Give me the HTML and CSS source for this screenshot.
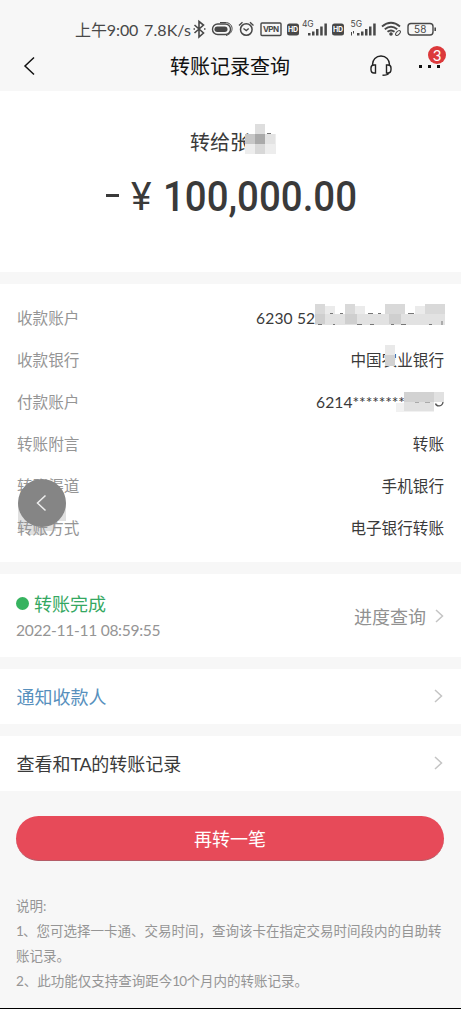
FILE: index.html
```html
<!DOCTYPE html>
<html lang="zh-CN">
<head>
<meta charset="utf-8">
<title>转账记录查询</title>
<link rel="stylesheet" href="styles.css">
</head>
<body>
<div class="screen">
  <header class="top">
    <div class="status">
      <span class="clock">上午9:00</span><span class="speed">7.8K/s</span>
      <svg class="status-icons" width="250" height="24" viewBox="190 17 250 24" fill="none" stroke="#484848" stroke-width="1.4">
        <path d="M194.500 25l9 8-4.500 4V21.500l4.500 3.500-9 8M193.500 29h1.500M204 29h1.500" stroke-width="1.600"/>
        <rect x="212.500" y="24" width="18" height="10.500" rx="5.200"/>
        <rect x="214.500" y="26.500" width="13" height="5.500" rx="2.700" fill="#484848" stroke="none"/>
        <path d="M220 22.500h5c9 0 9.500 11 1 13" stroke-width="1"/>
        <circle cx="246.300" cy="29.500" r="5.800" stroke-width="1.500"/>
        <path d="M239 25.500l3.500-3.200M253.500 25.500L250 22.300M243.500 28.500l2.800 2 2.400-2"/>
        <rect x="261" y="23" width="20" height="12.500" rx="1"/>
        <rect x="287" y="23.500" width="12" height="12" rx="2.500" fill="#484848" stroke="none"/>
        <rect x="332" y="23.500" width="12" height="12" rx="2.500" fill="#484848" stroke="none"/>
        <g fill="#484848" stroke="none">
          <path d="M308 33h2.500v2.500H308zM312 31.500h2.500v4H312zM316 29h2.500v6.500H316zM320.200 26.500h2.500v9h-2.500zM324.400 23.500h2.500v12h-2.500z"/>
          <path d="M351 32h1v3.500h-1zM353 31h1v2.500h-1zM357 33h2.500v2.500H357zM361 31.500h2.500v4H361zM365 29h2.500v6.500H365zM369 26.500h2.500v9H369zM373.200 23.500h2.500v12h-2.500z"/>
          <circle cx="391" cy="34" r="1.800"/>
        </g>
        <path d="M382 26.500q9-7.500 18 0M384.800 29.300q6.200-5 12.400 0M387.500 31.800q3.500-2.800 7 0" stroke-width="1.900"/>
        <ellipse cx="398" cy="33" rx="3" ry="1.600" transform="rotate(-45 398 33)" stroke-width="1"/>
        <rect x="408" y="23.500" width="25" height="11.500" rx="3"/>
        <path d="M435.200 27.500v3.500" stroke-width="1.600"/>
        <g fill="#484848" stroke="none" font-family="Inter, sans-serif">
          <text x="263" y="32.200" font-size="8" font-weight="700" textLength="16">VPN</text>
          <text x="302" y="27" font-size="8.500" textLength="11.500">4G</text>
          <text x="350.500" y="27" font-size="8.500" textLength="11.500">5G</text>
          <text x="414" y="32.800" font-size="10" textLength="12.500">58</text>
          <g fill="#fff" font-size="7" font-weight="700"><text x="288" y="32" textLength="10">HD</text><text x="333" y="32" textLength="10">HD</text></g>
        </g>
      </svg>
    </div>
    <div class="nav">
      <svg class="back" width="14" height="20" viewBox="0 0 14 20" fill="none" stroke="#111" stroke-width="1.5"><path d="M11 1.500L2 10l9 8.500"/></svg>
      <h1 class="title">转账记录查询</h1>
      <svg class="headset" width="24" height="24" viewBox="0 0 24 24" fill="none" stroke="#222" stroke-width="1.400"><path d="M3.500 12V10.500C3.500 5.700 7 2 12 2s8.500 3.700 8.500 8.500V12M6.500 11H5c-2 0-3 1.200-3 3v1.500c0 2 1 3.500 3 3.500h1.500zM17.500 11H19c2 0 3 1.200 3 3v1.500c0 2-1 3.500-3 3.500h-1.500zM20 19c-1 1.900-3 2.300-6.500 2.300"/></svg>
      <div class="more"><i></i><i></i><i></i><b class="badge">3</b></div>
    </div>
  </header>

  <section class="card amount-card">
    <div class="payee">转给张<svg class="mask" width="31" height="31" viewBox="0 0 31 31"><path fill="#ededed" d="M0 10h31v20H0z"/><path fill="#dedede" d="M10 0h10v10H10z"/><path fill="#c7c7c7" d="M0 10h10v10H0z"/><path fill="#aaa" d="M10 10h10v10H10z"/><path fill="#d8d8d8" d="M10 20h10v10H10z"/><path fill="#e3e3e3" d="M20 10h10v10H20z"/><path stroke="#777" d="M22 9.500h4"/></svg></div>
    <div class="amount"><span class="minus"></span><span class="yen">¥</span><span class="figure">100,000.00</span></div>
  </section>

  <section class="card details">
    <div class="row"><span>收款账户</span><span class="value">6230 52<svg class="mask account-mask" width="130" height="23" viewBox="0 0 130 23">
      <path fill="#e2e2e2" d="M0 10h130v11H0z"/><path fill="#cfcfcf" d="M0 10h10v10H0zM30 10h12v10H30zM74 10h12v10H74z"/><path fill="#d9d9d9" d="M0 0h10v10H0zM30 0h10v10H30zM70 0h20v10H70zM110 0h20v10h-20z"/><path fill="#ebebeb" d="M10 2h10v8H10zM40 2h10v8H40zM100 2h10v8h-10z"/>
      <path stroke="#777" stroke-width="1" d="M15 9.500h3M25 9.500h3M53 9.500h5M63 9.500h3M93 9.500h6M3 20.500h4M18 20.500h2M42 20.500h5M55 20.500h4M76 20.500h3M86 20.500h5M114 20.500h3M127 17v4"/></svg></span></div>
    <div class="row"><span>收款银行</span><span class="value">中国农业银行<svg class="mask bank-mask" width="10" height="21" viewBox="0 0 10 21"><path fill="#e9e9e9" d="M0 0h10v10H0z"/><path fill="#d2d2d2" d="M0 10h10v11H0z"/></svg></span></div>
    <div class="row"><span>付款账户</span><span class="value payer">6214<span class="stars">********</span><svg class="mask payer-mask" width="48" height="21" viewBox="0 0 48 21"><path fill="#f1f1f1" d="M0 12h38v9H0z"/><path fill="#d2d2d2" d="M8 1h30v10H8z"/><path fill="#e1e1e1" d="M38 1h10v10H38zM8 11h30v9H8z"/><path stroke="#aaa" d="M19 11.500h4M29 11.500h5"/><path fill="none" stroke="#555" stroke-width="1.300" d="M39.500 12.500c.8 3.300 7 3.300 7.500-1.500"/></svg></span></div>
    <div class="row"><span>转账附言</span><span class="value">转账</span></div>
    <div class="row"><span>转账渠道</span><span class="value">手机银行</span></div>
    <div class="row"><span>转账方式</span><span class="value">电子银行转账</span></div>
    <svg class="float" width="52" height="60" viewBox="0 0 52 60"><path fill="#999" fill-opacity=".3" d="M2 27h48v17H40v10H30v4H12v-4H2z"/><circle cx="26" cy="26" r="24" fill="#858585"/><path d="M29.500 18.500L21.500 26l8 7.500" fill="none" stroke="#eee" stroke-width="1.500"/></svg>
  </section>

  <section class="card progress">
    <div><div class="done"><i class="dot"></i>转账完成</div><div class="date">2022-11-11 08:59:55</div></div>
    <div class="query">进度查询<svg class="chev" width="9" height="14" viewBox="0 0 9 14"><path d="M1 1l6.500 6L1 13"/></svg></div>
  </section>

  <section class="card link notify"><span>通知收款人</span><svg class="chev" width="9" height="14" viewBox="0 0 9 14"><path d="M1 1l6.500 6L1 13"/></svg></section>
  <section class="card link"><span>查看和<span class="ta">TA</span>的转账记录</span><svg class="chev" width="9" height="14" viewBox="0 0 9 14"><path d="M1 1l6.500 6L1 13"/></svg></section>

  <button class="again">再转一笔</button>
  <div class="notes">说明:<br><span class="num">1</span>、您可选择一卡通、交易时间，查询该卡在指定交易时间段内的自助转<br>账记录。<br>2、此功能仅支持查询距今<span class="num">10</span>个月内的转账记录。</div>
</div>
</body>
</html>
```
FILE: styles.css
```css
* { box-sizing: border-box; }
body { margin: 0; font-family: Lato, "Noto Sans CJK SC", sans-serif; color: #3a3a3a; }
svg { display: block; flex: none; }
.screen { width: 461px; height: 1009px; overflow: hidden; background: #f7f7f7; border-bottom: 1px solid #000; white-space: nowrap; }
.top { height: 91px; }
.status { display: flex; align-items: center; height: 41px; padding: 17px 0 0 75px; font-size: 16px; color: #484848; }
.clock { width: 69px; letter-spacing: -.1px; }
.speed { width: 46px; letter-spacing: .1px; }
.nav { display: grid; grid-template-columns: 147px 120px 78px 24px 1fr; align-items: center; height: 50px; padding: 0 0 0 23px; }
.title { margin: 0; font-size: 20px; line-height: 28px; font-weight: 400; color: #111; }
.headset { grid-column: 4; margin-left: 1px; }
.more { position: relative; display: flex; gap: 6px; margin-left: 27px; }
.more i { width: 3px; height: 3px; background: #111; }
.badge { position: absolute; left: 9px; top: -19px; width: 18px; height: 18px; border-radius: 50%; background: #dc393b; color: #fff; font-size: 15px; line-height: 18px; font-weight: 400; text-align: center; }
.card { background: #fff; margin-bottom: 12px; }
.amount-card { height: 181px; padding-top: 36px; }
.payee { position: relative; padding-left: 190px; font-size: 20px; line-height: 30px; }
.mask { position: absolute; }
.payee .mask { left: 245px; top: -3px; }
.amount { display: flex; height: 48px; margin-top: 16px; padding-left: 106px; line-height: 48px; font-family: Roboto, sans-serif; font-size: 42px; }
.minus { width: 13px; height: 3px; margin: 21px 12px 0 0; background: #3a3a3a; }
.yen { width: 32px; font-size: 39px; }
.figure { font-weight: 500; transform: scaleX(.915); transform-origin: left; }
.details { position: relative; height: 278px; padding: 13px 17px 0; font-size: 15.6px; }
.row { display: flex; justify-content: space-between; height: 42px; line-height: 42px; color: #959595; }
.value { position: relative; color: #3a3a3a; }
.row:first-child .value { width: 188px; letter-spacing: .15px; }
.account-mask { left: 59px; top: 7px; }
.bank-mask { left: 35px; top: 6px; }
.payer { width: 128px; letter-spacing: .1px; }
.stars { letter-spacing: -.1px; }
.payer-mask { right: 0; top: 10px; }
.float { position: absolute; left: 16px; top: 193px; }
.progress { display: flex; align-items: center; justify-content: space-between; height: 83px; padding: 0 17px 0 16px; }
.done { display: flex; align-items: center; gap: 5px; font-size: 18px; line-height: 28px; color: #35a862; }
.dot { width: 13px; height: 13px; border-radius: 50%; background: #36b35f; }
.date { font-size: 15.6px; line-height: 24px; letter-spacing: -.3px; color: #959595; }
.query { display: flex; align-items: center; gap: 9px; font-size: 18px; color: #919191; }
.chev { fill: none; stroke: #c4c4c4; stroke-width: 1.5; }
.link { display: flex; align-items: center; justify-content: space-between; height: 55px; padding: 0 18px 1px 16.5px; font-size: 18px; }
.ta { letter-spacing: -.4px; }
.notify { color: #5790bd; }
.again { display: block; width: 428px; height: 45px; margin: 25px 0 0 16px; padding: 0; border: 0; border-bottom: 1px solid #b45c67; border-radius: 23px; background: #e74a59; color: #fff; font: 18px "Noto Sans CJK SC", sans-serif; }
.notes { margin: 33px 0 0 16px; font-size: 13.5px; line-height: 25px; color: #959595; }
.num { letter-spacing: -.8px; }
```
